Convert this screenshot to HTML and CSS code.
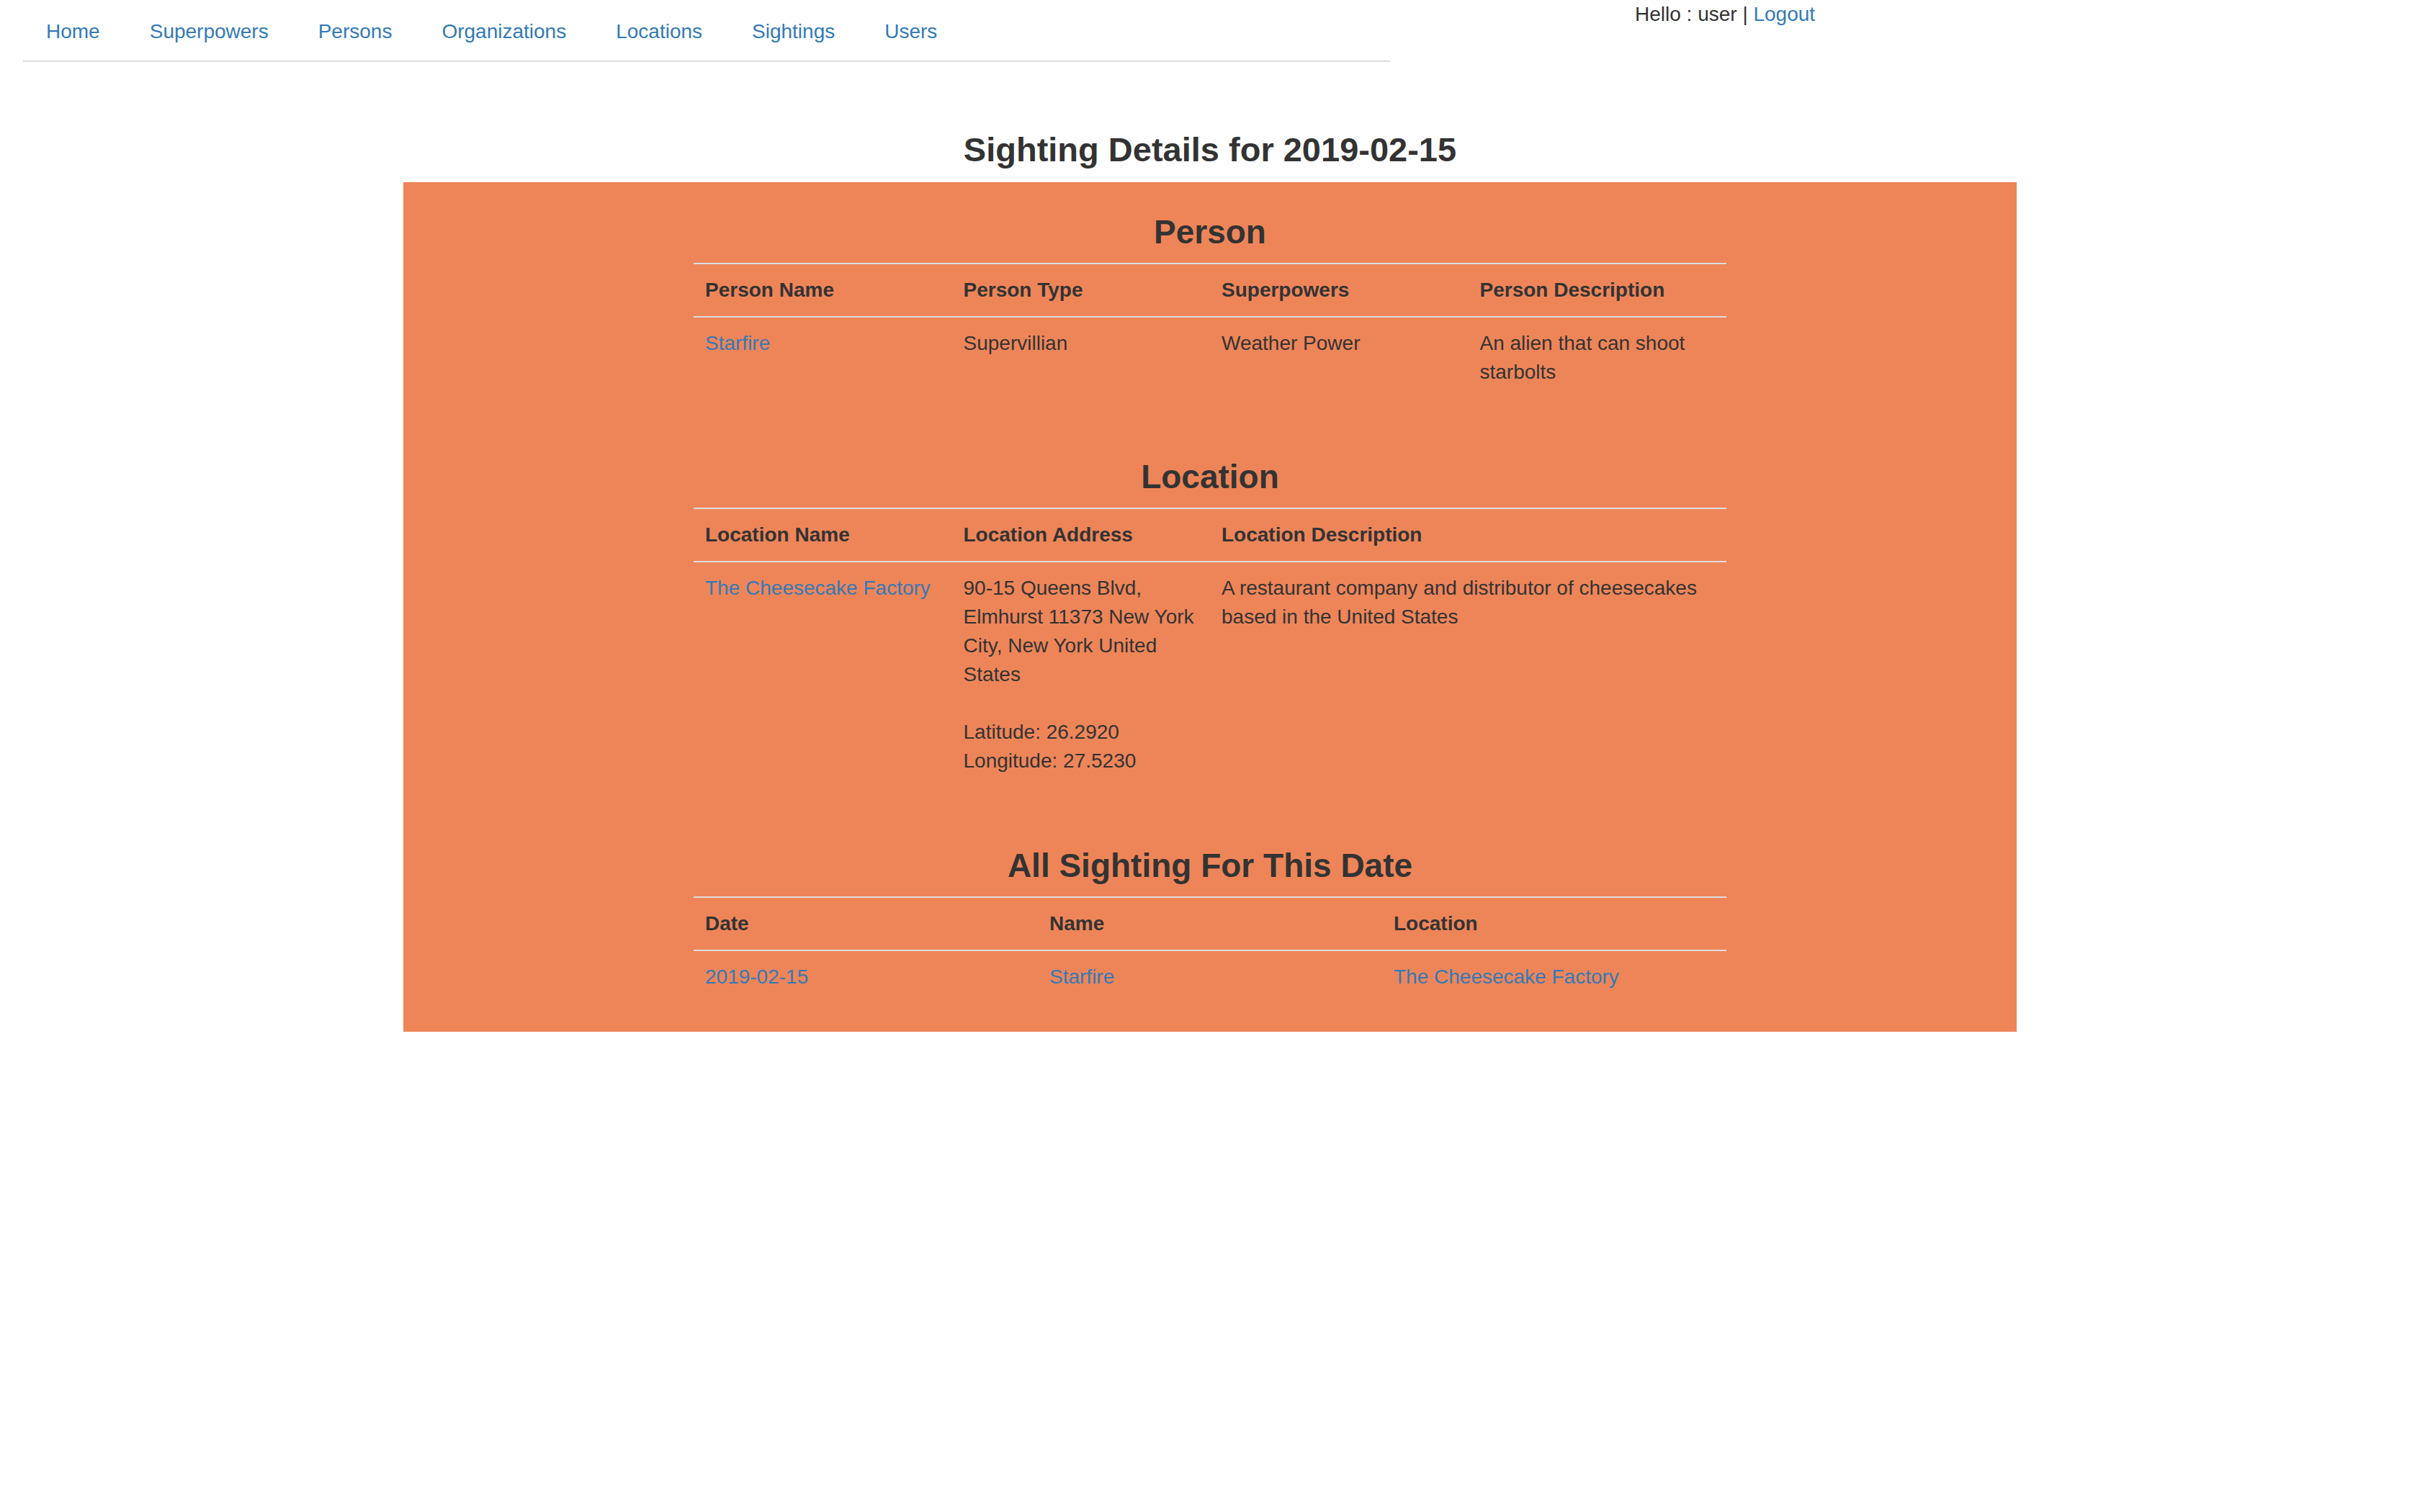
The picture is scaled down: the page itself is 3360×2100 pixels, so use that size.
FILE: index.html
```html
<!DOCTYPE html>
<html lang="en">
<head>
<meta charset="utf-8">
<title>Sighting Details</title>
<link rel="stylesheet" href="styles.css">
</head>
<body>
<div class="topbar">
  <div class="nav-col">
    <ul class="tabs">
      <li><a href="#">Home</a></li>
      <li><a href="#">Superpowers</a></li>
      <li><a href="#">Persons</a></li>
      <li><a href="#">Organizations</a></li>
      <li><a href="#">Locations</a></li>
      <li><a href="#">Sightings</a></li>
      <li><a href="#">Users</a></li>
    </ul>
  </div>
  <div class="user-col">Hello : user | <a href="#">Logout</a></div>
</div>

<h3 class="page-title">Sighting Details for 2019-02-15</h3>

<div class="panel">
  <div class="content">
    <h3 class="section-title">Person</h3>
    <table class="table cols-4">
      <tr>
        <th>Person Name</th>
        <th>Person Type</th>
        <th>Superpowers</th>
        <th>Person Description</th>
      </tr>
      <tr>
        <td><a href="#">Starfire</a></td>
        <td>Supervillian</td>
        <td>Weather Power</td>
        <td>An alien that can shoot starbolts</td>
      </tr>
    </table>

    <h3 class="section-title">Location</h3>
    <table class="table cols-loc">
      <tr>
        <th>Location Name</th>
        <th>Location Address</th>
        <th>Location Description</th>
      </tr>
      <tr>
        <td><a href="#">The Cheesecake Factory</a></td>
        <td>90-15 Queens Blvd, Elmhurst 11373 New York City, New York United States<br><br>Latitude: 26.2920<br>Longitude: 27.5230</td>
        <td>A restaurant company and distributor of cheesecakes based in the United States</td>
      </tr>
    </table>

    <h3 class="section-title">All Sighting For This Date</h3>
    <table class="table cols-3">
      <tr>
        <th>Date</th>
        <th>Name</th>
        <th>Location</th>
      </tr>
      <tr>
        <td><a href="#">2019-02-15</a></td>
        <td><a href="#">Starfire</a></td>
        <td><a href="#">The Cheesecake Factory</a></td>
      </tr>
    </table>
  </div>
</div>
</body>
</html>
```

FILE: styles.css
```css
* {
  box-sizing: border-box;
}

html,
body {
  margin: 0;
  padding: 0;
}

body {
  font-family: "Liberation Sans", Arial, sans-serif;
  font-size: 28px;
  line-height: 40px;
  color: #333333;
  background: #ffffff;
}

a {
  color: #337ab7;
  text-decoration: none;
}

/* top bar */
.topbar {
  display: flex;
  align-items: flex-start;
}

.nav-col {
  width: 1960px;
  padding: 0 30px 0 32px;
}

.tabs {
  display: flex;
  list-style: none;
  margin: 0;
  padding: 0;
  border-bottom: 2px solid #dddddd;
}

.tabs a {
  display: block;
  margin-right: 5px;
  padding: 22px 30px 18px;
  border: 2px solid transparent;
  line-height: 40px;
}

.user-col {
  margin-left: 280px;
  padding: 0 30px;
  white-space: nowrap;
}

/* title */
.page-title {
  margin: 96px 0 19px;
  text-align: center;
  font-size: 47px;
  line-height: 52px;
  font-weight: 700;
  color: #333333;
}

/* orange panel */
.panel {
  width: 2240px;
  margin: 0 auto;
  background: #ee8559;
}

.content {
  width: 1434px;
  margin: 0 auto;
  display: flex;
  flex-direction: column;
}

.section-title {
  margin: 43px 0 17px;
  text-align: center;
  font-size: 46px;
  line-height: 52px;
  font-weight: 700;
  color: #333333;
}

.table {
  width: 100%;
  border-collapse: collapse;
  table-layout: fixed;
  margin-bottom: 40px;
}

.table th,
.table td {
  padding: 16px;
  line-height: 40px;
  border-top: 2px solid #dddddd;
  vertical-align: top;
  text-align: left;
}

.table th {
  font-weight: 700;
}

.cols-4 th {
  width: 25%;
}

.cols-3 th {
  width: 33.333%;
}

.cols-loc th:nth-child(1),
.cols-loc th:nth-child(2) {
  width: 25%;
}

.cols-loc th:nth-child(3) {
  width: 50%;
}
```
